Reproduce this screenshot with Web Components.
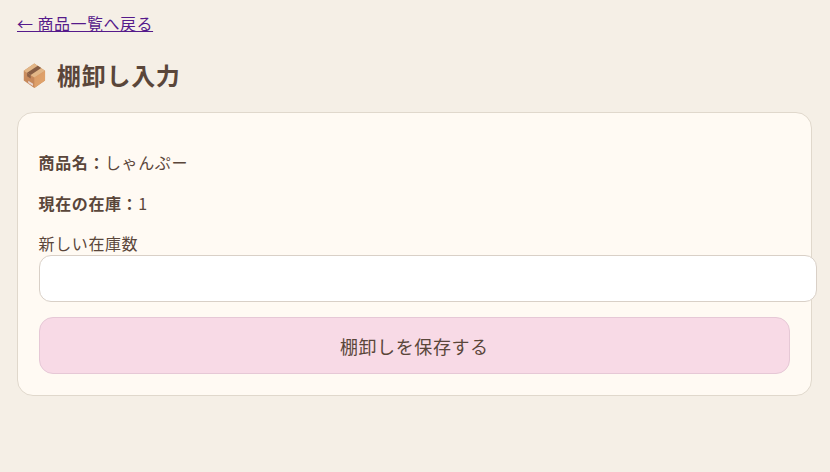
<!DOCTYPE html>
<html lang="ja">
<head>
<meta charset="utf-8">
<title>棚卸し入力</title>
<style>
  html, body { margin: 0; background: #f5efe6; }
  body {
    padding: 14px 18px 0 16.6px;
    font-family: "Noto Sans CJK JP", "Noto Sans", sans-serif;
    font-size: 16px;
    letter-spacing: 0.6px;
    color: #5a463a;
  }
</style>
</head>
<body>
<back-link href="#">← 商品一覧へ戻る</back-link>
<page-title>棚卸し入力</page-title>
<stock-card>
  <info-row label="商品名：">しゃんぷー</info-row>
  <info-row label="現在の在庫：">1</info-row>
  <stock-form label="新しい在庫数" action-text="棚卸しを保存する"></stock-form>
</stock-card>

<script>
class BackLink extends HTMLElement {
  constructor() {
    super();
    this.attachShadow({ mode: "open" });
  }

  connectedCallback() {
    const href = this.getAttribute("href") || "#";
    this.shadowRoot.innerHTML = `
      <style>
        :host { display: block; margin-left: 0.4px; line-height: 19px; letter-spacing: 0.5px; }
        a { color: #551a8b; text-decoration: underline; }
      </style>
      <a href="${href}"><slot></slot></a>
    `;
  }
}

class PageTitle extends HTMLElement {
  constructor() {
    super();
    this.attachShadow({ mode: "open" });
  }

  connectedCallback() {
    this.shadowRoot.innerHTML = `
      <style>
        :host {
          display: flex;
          align-items: center;
          margin: 24px 0 19px 6px;
          font-size: 24px;
          font-weight: 700;
          line-height: 36px;
          letter-spacing: 0.72px;
        }
        svg { flex: none; width: 23px; height: 27px; margin-right: 11.4px; }
      </style>
      <svg viewBox="0 0 24 28" aria-hidden="true">
        <defs>
          <linearGradient id="left" x1="0" y1="0" x2="0.8" y2="1">
            <stop offset="0" stop-color="#cc9264"/>
            <stop offset="1" stop-color="#c28052"/>
          </linearGradient>
          <linearGradient id="right" x1="0" y1="0" x2="1" y2="1">
            <stop offset="0" stop-color="#d99a66"/>
            <stop offset="1" stop-color="#e2a56c"/>
          </linearGradient>
        </defs>
        <path d="M11.8 1.500 23 9v10.200L11.800 27 .8 19.200V9z" fill="url(#left)"/>
        <path d="M23 9 11.800 16v11L23 19.200z" fill="url(#right)"/>
        <path d="M11.8 1.500 23 9 11.800 16 .8 9z" fill="#e2b687"/>
        <path d="M15.4 3.900 19 6.300 8 13.500 4.300 11.200z" fill="#865c43"/>
        <path d="M4.300 11.200 8 13.500V17L4.300 14.700z" fill="#8c6146"/>
        <path d="M5.500 19.500 10.500 22.700V25L5.500 21.800z" fill="#e8d6d2"/>
      </svg>
      <span><slot></slot></span>
    `;
  }
}

class StockCard extends HTMLElement {
  constructor() {
    super();
    this.attachShadow({ mode: "open" });
  }

  connectedCallback() {
    this.shadowRoot.innerHTML = `
      <style>
        :host {
          display: block;
          padding: 21px;
          background: #fffaf3;
          border: 1px solid #e0d8cc;
          border-radius: 16px;
        }
      </style>
      <slot></slot>
    `;
  }
}

class InfoRow extends HTMLElement {
  constructor() {
    super();
    this.attachShadow({ mode: "open" });
  }

  connectedCallback() {
    const label = this.getAttribute("label") || "";
    this.shadowRoot.innerHTML = `
      <style>
        :host { display: block; margin: 16px 0 17px; line-height: 24px; }
        strong { font-weight: 700; }
      </style>
      <strong>${label}</strong><slot></slot>
    `;
  }
}

class StockForm extends HTMLElement {
  constructor() {
    super();
    this.attachShadow({ mode: "open" });
  }

  connectedCallback() {
    const label = this.getAttribute("label") || "";
    const actionText = this.getAttribute("action-text") || "";
    this.shadowRoot.innerHTML = `
      <style>
        :host { display: block; }
        label { display: block; line-height: 24px; margin-top: -1px; }
        input {
          display: block;
          box-sizing: border-box;
          width: 778px;
          height: 47px;
          margin: 0 0 15px;
          padding: 12px;
          background: #fff;
          border: 1px solid #d9d0c7;
          border-radius: 12px;
          font: inherit;
          color: inherit;
        }
        button {
          display: block;
          box-sizing: border-box;
          width: 100%;
          height: 57px;
          padding: 0;
          background: #f8dae6;
          border: 1px solid #e6c8d6;
          border-radius: 14px;
          font-family: inherit;
          font-size: 18px;
          letter-spacing: 0.6px;
          color: #5a463a;
        }
      </style>
      <label for="count">${label}</label>
      <input id="count" type="number">
      <button type="button">${actionText}</button>
    `;
  }
}

customElements.define("back-link", BackLink);
customElements.define("page-title", PageTitle);
customElements.define("stock-card", StockCard);
customElements.define("info-row", InfoRow);
customElements.define("stock-form", StockForm);
</script>
</body>
</html>
